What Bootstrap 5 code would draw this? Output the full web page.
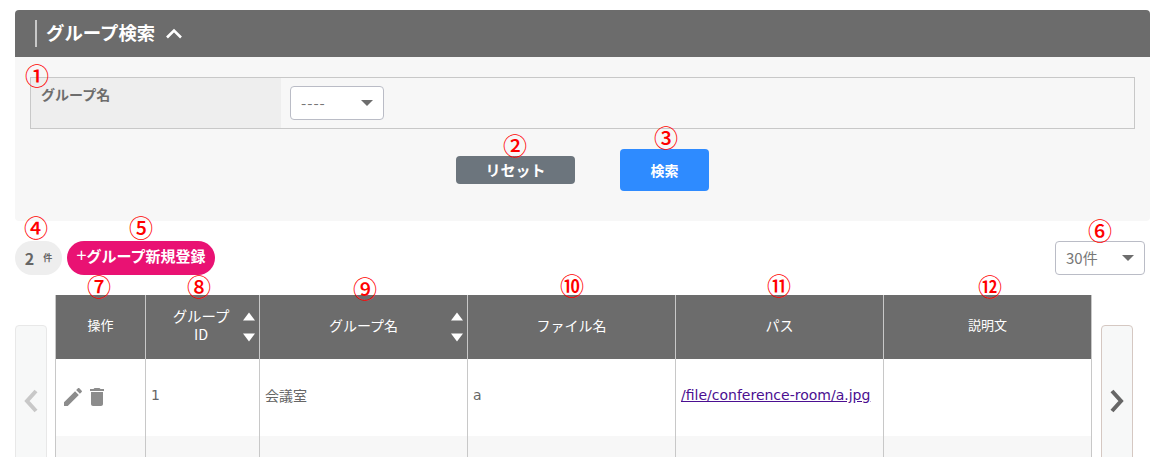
<!DOCTYPE html>
<html lang="ja">
<head>
<meta charset="utf-8">
<title>グループ検索</title>
<link href="https://cdn.jsdelivr.net/npm/bootstrap@5.3.0/dist/css/bootstrap.min.css" rel="stylesheet">
<style>
html,body{margin:0;height:457px;overflow:hidden;background:#fff}
body{font-family:"Noto Sans CJK JP","Liberation Sans",sans-serif;color:#666;font-size:13px}
.stage{position:relative;height:457px;overflow:hidden;padding:10px 3px 0 15px}
.panel-head{height:47px;background:#6c6c6c;border-radius:4px 4px 0 0;color:#fff;font-size:18.4px;font-weight:700;padding-left:20px;gap:10px}
.head-title{border-left:2px solid #c8c8c8;padding-left:9px;height:27px;line-height:25px}
.panel-body{height:164px;background:#f7f7f7;border-radius:0 0 4px 4px;padding:20px 15px 0}
.search-box{height:52px;border:1px solid #c8c8c8}
.search-label{width:250px;background:#eee;font-size:14px;font-weight:700;color:#6d6d6d;padding:6px 0 0 10px;line-height:20px}
.search-value{padding:8px 0 0 9px}
.fake-select{background:#fff;border:1px solid #babcc6;border-radius:4px;height:34px;color:#777;font-size:15px;padding:0 10px;display:flex;align-items:center;justify-content:space-between}
.sel-a{width:94px}
.sel-b{width:90px}
.dash-text{letter-spacing:1px}
.caret-down{width:0;height:0;border-left:6px solid transparent;border-right:6px solid transparent;border-top:6px solid #6d6d6d}
.btn-row{height:62px;padding-left:426px;padding-top:20px;gap:45px;align-items:flex-start}
.btn-reset{width:119px;height:28px;margin-top:7px;padding:0;background:#6c757d;color:#fff;border:0;border-radius:4px;font-size:15px;font-weight:700;line-height:24px}
.btn-find{width:89px;height:42px;padding:0;background:#2e8bff;color:#fff;border:0;border-radius:4px;font-size:14px;font-weight:700}
.tool-row{margin-top:20px;height:34px;padding-right:5px}
.count-pill{width:47px;height:34px;border-radius:17px;background:#eee;font-weight:700;color:#666;font-size:16px;gap:9px}
.count-unit{font-size:9px}
.new-btn{margin-left:5px;width:148px;height:34px;border-radius:17px;background:#e91273;color:#fff;font-size:15px;font-weight:700;padding:0 0 3px;border:0;white-space:nowrap}
.new-btn:hover{background:#e91273;color:#fff}
.plus-mark{font-weight:400;font-size:18px;line-height:1}
.table-row{margin-top:20px}
.nav-side{width:32px;height:200px;margin-top:30px;background:#f7f8f8;border-radius:4px;flex:none;padding-top:61px;text-align:center}
.nav-prev{border:1px solid #e8e8e8}
.nav-next{border:1px solid #d5c8c2;margin-left:9px}
.side-gap{margin-right:8px}
.data-table{width:1037px;table-layout:fixed;border-collapse:collapse;margin:0;align-self:flex-start}
.data-table th,.data-table td{border:0 solid #c8c8c8;border-left-width:1px;border-right-width:1px;padding:0}
.data-table th{height:64px;background:#6c6c6c;color:#fff;font-weight:400;font-size:14px;text-align:center;vertical-align:middle;line-height:18px;padding-bottom:4px}
.data-table th.small-head{font-size:13px}
.data-table td{height:77px;background:#fff;font-size:14px;color:#666;padding:0 0 4px 5px;vertical-align:middle}
.data-table td.latin{font-family:"DejaVu Sans",sans-serif;font-size:14px}
.data-table td.icon-cell{padding:0 0 2px 5px}
.data-table tr.alt td{background:#f7f7f7}
.w1{width:90px}.w2{width:114px}.w3{width:208px}
.sort-wrap{position:relative}
.sort-tri{position:absolute;right:4px;top:50%;transform:translateY(-50%);display:flex;flex-direction:column;gap:13px}
.tri-up{width:0;height:0;border-left:6px solid transparent;border-right:6px solid transparent;border-bottom:8px solid #fff}
.tri-down{width:0;height:0;border-left:6px solid transparent;border-right:6px solid transparent;border-top:8px solid #fff}
.id-head{padding-right:3px;font-size:14.4px}
.data-table a{color:#4b0f91}
.note{position:absolute;color:#f00;font-size:24px;line-height:24px;width:24px;text-align:center;font-weight:500;font-family:"Noto Sans CJK JP",sans-serif}
.n1{left:25px;top:63px}.n2{left:503px;top:133px}.n3{left:654px;top:125px}.n4{left:24px;top:215px}.n5{left:129px;top:215px}.n6{left:1088px;top:218px}
.n7{left:87px;top:274px}.n8{left:187px;top:274px}.n9{left:353px;top:276px}.n10{left:560px;top:273px}.n11{left:767px;top:273px}.n12{left:978px;top:274px}
</style>
</head>
<body>
<div class="stage">
  <div class="panel-head d-flex align-items-center">
    <span class="head-title">グループ検索</span>
    <svg width="18" height="11" viewBox="0 0 18 11"><polyline points="2,9.5 9,2.5 16,9.5" fill="none" stroke="#fff" stroke-width="2.6"/></svg>
  </div>
  <div class="panel-body">
    <div class="search-box d-flex">
      <div class="search-label">グループ名</div>
      <div class="search-value"><div class="fake-select sel-a"><span class="dash-text">----</span><i class="caret-down"></i></div></div>
    </div>
    <div class="btn-row d-flex">
      <button type="button" class="btn btn-reset">リセット</button>
      <button type="button" class="btn btn-find">検索</button>
    </div>
  </div>
  <div class="tool-row d-flex align-items-center">
    <div class="count-pill d-flex align-items-center justify-content-center"><span>2</span><span class="count-unit">件</span></div>
    <button type="button" class="btn new-btn"><span class="plus-mark">+</span>グループ新規登録</button>
    <div class="fake-select sel-b ms-auto"><span>30件</span><i class="caret-down"></i></div>
  </div>
  <div class="table-row d-flex">
    <div class="nav-side nav-prev side-gap">
      <svg width="18" height="28" viewBox="0 0 18 28"><polyline points="14,4 5,14 14,24" fill="none" stroke="#c8c8c8" stroke-width="4"/></svg>
    </div>
    <table class="data-table">
      <thead>
        <tr>
          <th class="w1 small-head">操作</th>
          <th class="w2 sort-wrap"><div class="id-head">グループ<br>ID</div><div class="sort-tri"><i class="tri-up"></i><i class="tri-down"></i></div></th>
          <th class="w3 sort-wrap">グループ名<div class="sort-tri"><i class="tri-up"></i><i class="tri-down"></i></div></th>
          <th class="w3">ファイル名</th>
          <th class="w3">パス</th>
          <th class="w3 small-head">説明文</th>
        </tr>
      </thead>
      <tbody>
        <tr>
          <td class="icon-cell">
            <div class="d-flex align-items-center">
              <svg width="24" height="24" viewBox="0 0 24 24" fill="#8c8c8c"><path d="M3 17.25V21h3.75L17.81 9.94l-3.75-3.75L3 17.25zM20.71 7.04c.39-.39.39-1.02 0-1.41l-2.34-2.34c-.39-.39-1.02-.39-1.41 0l-1.83 1.83 3.75 3.75 1.83-1.83z"/></svg>
              <svg width="24" height="24" viewBox="0 0 24 24" fill="#8c8c8c"><path d="M6 19c0 1.1.9 2 2 2h8c1.1 0 2-.9 2-2V7H6v12zM19 4h-3.5l-1-1h-5l-1 1H5v2h14V4z"/></svg>
            </div>
          </td>
          <td class="latin">1</td>
          <td>会議室</td>
          <td class="latin">a</td>
          <td class="latin"><a href="#">/file/conference-room/a.jpg</a></td>
          <td></td>
        </tr>
        <tr class="alt"><td></td><td></td><td></td><td></td><td></td><td></td></tr>
      </tbody>
    </table>
    <div class="nav-side nav-next">
      <svg width="18" height="28" viewBox="0 0 18 28"><polyline points="4,4 13,14 4,24" fill="none" stroke="#666" stroke-width="4"/></svg>
    </div>
  </div>
  <span class="note n1">①</span><span class="note n2">②</span><span class="note n3">③</span><span class="note n4">④</span><span class="note n5">⑤</span><span class="note n6">⑥</span><span class="note n7">⑦</span><span class="note n8">⑧</span><span class="note n9">⑨</span><span class="note n10">⑩</span><span class="note n11">⑪</span><span class="note n12">⑫</span>
</div>
</body>
</html>
